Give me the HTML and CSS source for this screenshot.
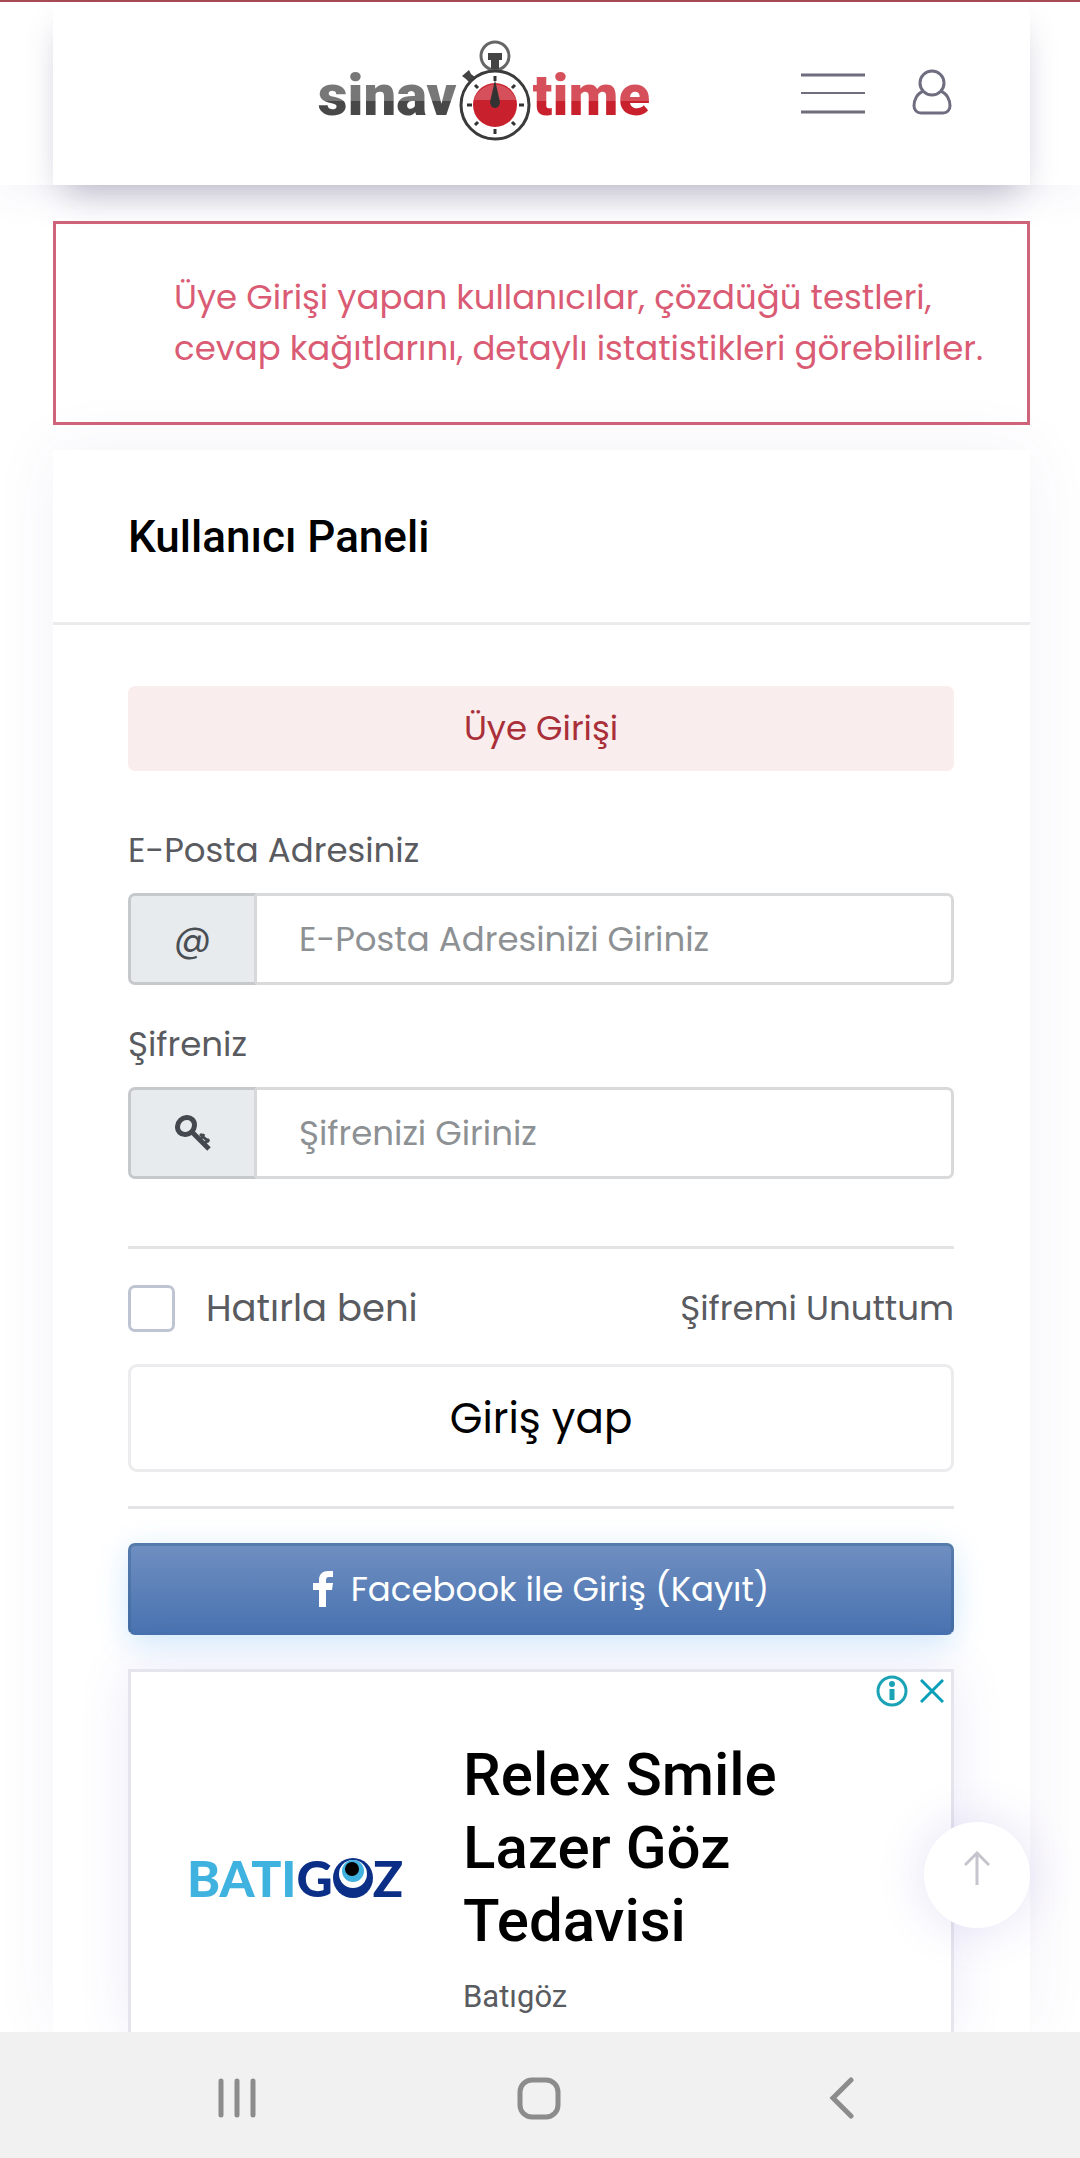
FILE: index.html
```html
<!DOCTYPE html>
<html lang="tr">
<head>
  <meta charset="UTF-8">
  <meta name="viewport" content="width=device-width, initial-scale=1">
  <title>Sınav Time</title>
  <link rel="stylesheet" href="styles.css">
</head>
<body>
  <header class="header">
    <div class="header-card">
      <a class="logo" href="#">
        <span class="logo-dark">sinav</span>
        <svg class="logo-watch" viewBox="0 0 76 104" aria-hidden="true">
          <circle cx="38" cy="16" r="14" fill="none" stroke="#666" stroke-width="3"/>
          <path d="M31 13h14v7h-3v9h-8v-9h-3z" fill="#444"/>
          <path d="M5 36l7-6 2 4 4 3-6 5-3-3z" fill="#444"/>
          <circle cx="38" cy="65" r="34" fill="#fff" stroke="#3b3b3b" stroke-width="3"/>
          <circle cx="38" cy="65" r="22" fill="#c8202c"/>
          <path d="M17 60a22 22 0 0 1 42 0z" fill="#d5505a"/>
          <g stroke="#333" stroke-width="3">
            <path d="M38 36v5M38 89v5M10 65h5M62 65h5M18 45l3 3M55 48l3-3M18 85l3-3M55 82l3 3"/>
          </g>
          <path d="M38 40l5 22a5 6 0 1 1-10 0z" fill="#333"/>
        </svg>
        <span class="logo-red">time</span>
      </a>
      <button class="icon-btn menu-btn" aria-label="Menü">
        <svg width="64" height="42" viewBox="0 0 64 42">
          <path d="M0 3h64M0 40h64" stroke="#6f6d7e" stroke-width="3"/>
          <path d="M0 21h64" stroke="#6f6d7e" stroke-width="2"/>
        </svg>
      </button>
      <button class="icon-btn user-btn" aria-label="Hesabım">
        <svg width="40" height="46" viewBox="0 0 40 46" fill="none" stroke="#6f6d80" stroke-width="3">
          <circle cx="20" cy="14" r="12"/>
          <path d="M12 22C5 24 2 31 2 37c0 4 3 7 7 7h22c4 0 7-3 7-7 0-6-3-13-10-15"/>
        </svg>
      </button>
    </div>
  </header>

  <main class="content">
    <p class="notice">Üye Girişi yapan kullanıcılar, çözdüğü testleri, cevap kağıtlarını, detaylı istatistikleri görebilirler.</p>

    <section class="panel">
      <h1 class="panel-title">Kullanıcı Paneli</h1>
      <form class="panel-body">
        <div class="badge">Üye Girişi</div>

        <label class="label" for="email">E-Posta Adresiniz</label>
        <div class="input-group">
          <span class="prefix">@</span>
          <input type="email" id="email" placeholder="E-Posta Adresinizi Giriniz">
        </div>

        <label class="label" for="password">Şifreniz</label>
        <div class="input-group">
          <span class="prefix">
            <svg width="38" height="38" viewBox="0 0 38 38" fill="none" stroke="#43484e">
              <ellipse cx="12" cy="12" rx="8" ry="9" transform="rotate(45 12 12)" stroke-width="5"/>
              <path d="M18 18l17 17" stroke-width="5"/>
              <path d="M30 30l5-5M26 26l4-6M26 20l9 8" stroke-width="3"/>
            </svg>
          </span>
          <input type="password" id="password" placeholder="Şifrenizi Giriniz">
        </div>

        <div class="login">
          <div class="options">
            <label class="remember"><input type="checkbox"> Hatırla beni</label>
            <a href="#">Şifremi Unuttum</a>
          </div>
          <button type="submit" class="login-btn">Giriş yap</button>
        </div>

        <button type="button" class="facebook-btn">
          <svg width="20" height="36" viewBox="0 0 20 36"><path d="M6 36V19H0v-7h6V9c0-6 4-9 9-9h5v6h-4c-2 0-3 1-3 3v3h7l-1 7h-6v17z" fill="#fff"/></svg>
          Facebook ile Giriş (Kayıt)
        </button>

        <div class="ad">
          <div class="ad-brand">
            <span class="brand-light">BATI</span><span class="brand-dark">G</span>
            <svg width="40" height="42" viewBox="0 0 40 42" aria-label="Ö">
              <circle cx="20" cy="21" r="20" fill="#0b2f87"/>
              <circle cx="20" cy="17" r="14" fill="#fff"/>
              <circle cx="20" cy="14" r="11" fill="#41b2df"/>
              <circle cx="19" cy="12" r="7" fill="#000"/>
            </svg>
            <span class="brand-dark">Z</span>
          </div>
          <div class="ad-text">
            <h2>Relex Smile Lazer Göz Tedavisi</h2>
            <p>Batıgöz</p>
          </div>
          <div class="ad-tools">
            <svg width="32" height="32" viewBox="0 0 32 32">
              <circle cx="16" cy="16" r="14" fill="none" stroke="#1ba3b5" stroke-width="3"/>
              <circle cx="16" cy="9" r="3" fill="#1ba3b5"/>
              <path d="M16 14v11" stroke="#1ba3b5" stroke-width="5"/>
            </svg>
            <svg width="24" height="24" viewBox="0 0 24 24"><path d="M1 1l22 22M23 1L1 23" stroke="#0a9fb8" stroke-width="3"/></svg>
          </div>
        </div>
      </form>
    </section>

    <button class="scroll-top" aria-label="Yukarı">
      <svg width="26" height="34" viewBox="0 0 26 34" fill="none" stroke="#c6c5cd" stroke-width="3"><path d="M13 34V2M1 14L13 2l12 12"/></svg>
    </button>
  </main>

  <nav class="navbar">
    <button class="icon-btn" aria-label="Son uygulamalar">
      <svg width="40" height="42" viewBox="0 0 40 42" stroke="#8c8c8c" stroke-width="5" stroke-linecap="round"><path d="M4 4v34M20 4v34M36 4v34"/></svg>
    </button>
    <button class="icon-btn" aria-label="Ana ekran">
      <svg width="44" height="44" viewBox="0 0 44 44" fill="none"><rect x="3" y="4" width="38" height="37" rx="12" stroke="#8c8c8c" stroke-width="5"/></svg>
    </button>
    <button class="icon-btn" aria-label="Geri">
      <svg width="34" height="42" viewBox="0 0 34 42" fill="none" stroke="#8c8c8c" stroke-width="5" stroke-linecap="round"><path d="M30 3L12 21l18 18"/></svg>
    </button>
  </nav>
</body>
</html>
```
FILE: styles.css
```css
* {
  box-sizing: border-box;
}

body {
  margin: 0;
  height: 100vh;
  display: flex;
  flex-direction: column;
  overflow: hidden;
  font-family: Poppins, Inter, sans-serif;
  font-size: 34px;
  line-height: 51px;
  color: #595b60;
  background: #fff;
}

button,
input {
  font: inherit;
}

svg {
  flex: none;
}

.header {
  position: relative;
  z-index: 2;
  padding: 0 50px 0 53px;
  border-top: 2px solid #a84a55;
  background: #fff;
  box-shadow: 0 8px 40px rgba(82, 63, 145, 0.07);
  clip-path: inset(0 0 -60px 0);
}

.header-card {
  height: 183px;
  padding: 38px 78px 0 0;
  display: grid;
  grid-template-columns: 1fr auto auto;
  column-gap: 47px;
  align-items: start;
  background: #fff;
  box-shadow: 0 16px 36px -10px rgba(60, 50, 120, 0.22), 0 20px 32px -14px rgba(0, 0, 0, 0.12);
}

.logo {
  display: flex;
  justify-content: flex-end;
  align-items: flex-start;
  padding-right: 104px;
  font-family: Roboto, sans-serif;
  font-size: 58px;
  font-weight: 900;
  line-height: 110px;
  text-decoration: none;
}

.logo-dark,
.logo-red {
  color: transparent;
  background: linear-gradient(#777 55%, #484848 55%);
  background-clip: text;
  -webkit-background-clip: text;
}

.logo-red {
  background-image: linear-gradient(#d5505a 55%, #c8202c 55%);
}

.logo-watch {
  width: 76px;
  height: 104px;
}

.icon-btn {
  display: flex;
  padding: 0;
  border: none;
  background: none;
  cursor: pointer;
}

.menu-btn {
  padding-top: 32px;
}

.user-btn {
  padding-top: 29px;
}

.content {
  position: relative;
  flex: 1;
  min-height: 0;
  display: flex;
  flex-direction: column;
  padding: 36px 50px 0 53px;
  overflow: hidden;
}

.notice {
  margin: 0 0 25px;
  padding: 48px 32px 48px 118px;
  border: 3px solid #d0647a;
  color: #da5b74;
}

.panel {
  flex: 1;
  display: flex;
  flex-direction: column;
  background: #fff;
  box-shadow: 0 0 60px rgba(82, 63, 145, 0.07);
}

.panel-title {
  margin: 0;
  padding: 61px 75px 59px;
  border-bottom: 3px solid #ebebed;
  font-family: Roboto, sans-serif;
  font-size: 44px;
  font-weight: 500;
  line-height: 52px;
  color: #000;
}

.panel-body {
  flex: 1;
  display: flex;
  flex-direction: column;
  padding: 61px 76px 0 75px;
}

.badge {
  margin-bottom: 28px;
  padding: 17px;
  border-radius: 7px;
  background: #faeded;
  color: #a92f39;
  text-align: center;
}

.label {
  padding: 26px 0 18px;
  line-height: 50px;
}

.input-group {
  display: flex;
  height: 92px;
  margin-bottom: 8px;
}

.prefix {
  width: 129px;
  display: flex;
  justify-content: center;
  align-items: center;
  border: 3px solid #c6c9cc;
  border-right-color: #d6d8da;
  border-radius: 7px 0 0 7px;
  background: #e8ebed;
  color: #4a4f55;
  font-size: 37px;
}

.input-group input {
  flex: 1;
  min-width: 0;
  padding: 0 42px;
  border: 3px solid #d8d9da;
  border-left: none;
  border-radius: 0 7px 7px 0;
  background: #fff;
}

.input-group input::placeholder {
  color: #8d9194;
  opacity: 1;
}

.login {
  margin-top: 59px;
  padding-bottom: 34px;
  border-top: 3px solid #e4e4e6;
  border-bottom: 3px solid #e4e4e6;
}

.options {
  display: flex;
  justify-content: space-between;
  align-items: center;
  padding: 34px 0 30px;
}

.options a {
  color: inherit;
  text-decoration: none;
}

.remember {
  display: flex;
  align-items: center;
  gap: 31px;
  font-size: 37px;
}

.remember input {
  appearance: none;
  width: 47px;
  height: 47px;
  margin: 0;
  border: 3px solid #bfc4d2;
  border-radius: 7px;
}

.login-btn {
  display: block;
  width: 100%;
  height: 108px;
  border: 3px solid #ececee;
  border-radius: 9px;
  background: #fff;
  color: #000;
  font-size: 42px;
  cursor: pointer;
}

.facebook-btn {
  display: flex;
  justify-content: center;
  align-items: center;
  gap: 18px;
  flex: none;
  height: 92px;
  margin: 34px 0;
  border: 3px solid rgba(60, 105, 150, 0.5);
  border-bottom-color: #4872ae;
  border-radius: 7px;
  background: linear-gradient(#708fc1, #4872b0);
  background-origin: border-box;
  box-shadow: 0 8px 32px rgba(20, 140, 240, 0.2);
  color: #fff;
  cursor: pointer;
}

.ad {
  position: relative;
  flex: 1;
  display: flex;
  padding: 66px 56px 0;
  gap: 62px;
  border: 3px solid #e6e4ec;
  border-bottom: none;
  background: #fff;
  box-shadow: 0 0 50px rgba(82, 63, 190, 0.1);
}

.ad-brand {
  display: flex;
  align-items: center;
  width: 214px;
  height: 280px;
  font-family: Lato, sans-serif;
  font-size: 50px;
  font-weight: 900;
}

.brand-light {
  color: #3fb2e0;
}

.brand-dark {
  color: #0b2f87;
}

.ad-text {
  width: 340px;
  font-family: Roboto, sans-serif;
}

.ad-text h2 {
  margin: 0;
  font-size: 60px;
  font-weight: 500;
  line-height: 73px;
  color: #000;
}

.ad-text p {
  margin: 14px 0 0;
  font-size: 31px;
}

.ad-tools {
  position: absolute;
  top: 3px;
  right: 7px;
  display: flex;
  align-items: center;
  gap: 12px;
}

.scroll-top {
  position: absolute;
  right: 50px;
  bottom: 104px;
  display: flex;
  justify-content: center;
  align-items: center;
  width: 106px;
  height: 106px;
  padding-bottom: 16px;
  border: none;
  border-radius: 50%;
  background: #fff;
  box-shadow: 0 0 50px rgba(82, 63, 190, 0.15);
  cursor: pointer;
}

.navbar {
  position: relative;
  display: flex;
  justify-content: space-between;
  align-items: center;
  height: 126px;
  padding: 5px 225px 0 217px;
  background: #f1f1f1;
}
```
